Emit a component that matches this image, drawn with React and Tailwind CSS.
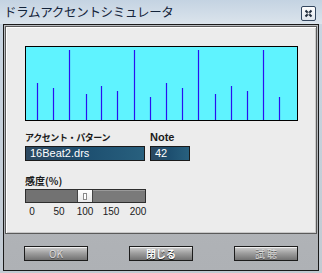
import React from 'react'

const jp = '"Noto Sans CJK JP", "Liberation Sans", sans-serif'
const sans = '"Liberation Sans", "Noto Sans CJK JP", sans-serif'

// accent lines: x inside chart box, top y inside chart box
const accents = [
  [11, 36], [27, 41], [43, 3], [60, 47], [75, 39], [91, 44], [108, 3], [124, 50],
  [140, 36], [156, 41], [172, 3], [189, 47], [205, 39], [221, 44], [237, 3], [253, 50],
]

function Button({ label, active }) {
  return (
    <div className="w-[64px] h-[15px] border border-[#1c1c1c] bg-gradient-to-b from-[#cfcfcf] via-[#9c9c9c] to-[#727272] shadow-[inset_0_1px_0_#efefef] flex items-center justify-center">
      <span
        className={active ? 'text-[10px] leading-none font-bold text-white [text-shadow:0_1px_0_#222]' : 'text-[10px] leading-none text-[#dcdcdc] [text-shadow:0_1px_0_#555]'}
        style={{ fontFamily: jp }}
      >
        {label}
      </span>
    </div>
  )
}

export default function App() {
  return (
    <div className="w-[322px] h-[273px] bg-gradient-to-b from-[#c9d6e3] to-[#c2cad2] overflow-hidden">
      {/* Title bar */}
      <div className="h-[24px] flex items-center justify-between pl-[4px] pr-[6px] bg-gradient-to-b from-[#c4d3e2] to-[#dbe4ec]">
        <span className="text-[12.5px] leading-none text-[#14243a] tracking-[-0.3px]" style={{ fontFamily: jp }}>
          ドラムアクセントシミュレータ
        </span>
        <div className="w-[15px] h-[15px] mt-[2px] rounded-[2px] border border-[#34465e] bg-gradient-to-b from-white to-[#dfe5ec] flex items-center justify-center">
          <svg width="9" height="9" viewBox="0 0 9 9">
            <path d="M1.5 1.5 L7.5 7.5 M7.5 1.5 L1.5 7.5" stroke="#1e2a3a" strokeWidth="2" />
            <rect x="3.5" y="3.5" width="2" height="2" fill="#fff" />
          </svg>
        </div>
      </div>

      {/* Window body */}
      <div className="ml-[3px] w-[316px] h-[247px] border border-[#1a1a1a] bg-gradient-to-b from-[#b9bcc0] to-[#aeb1b5]">
        {/* Panel */}
        <div className="mt-[1px] ml-[1px] w-[312px] h-[208px] border border-[#5a5a5a] bg-[#ececec] shadow-[inset_1px_1px_0_#ffffff,inset_-1px_-1px_0_#c8c8c8] pl-[19px] pt-[19px]">
          <div className="w-[273px] h-[75px] border border-black bg-[#5ff3ff]">
            <svg width="271" height="73" viewBox="0 0 271 73" className="block">
              {accents.map(([x, y], i) => (
                <line key={i} x1={x + 0.5} y1={y} x2={x + 0.5} y2={73} stroke="#2a10f0" strokeWidth="1.2" />
              ))}
            </svg>
          </div>

          <div className="mt-[10px] flex h-[12px] items-center">
            <span className="w-[125px] text-[9px] leading-none font-bold text-[#1a1a1a] tracking-[-0.4px]" style={{ fontFamily: jp }}>
              アクセント・パターン
            </span>
            <span className="text-[11px] leading-none font-bold text-[#1a1a1a]" style={{ fontFamily: sans }}>
              Note
            </span>
          </div>

          <div className="mt-[3px] flex gap-[5px]">
            <div className="w-[120px] h-[15px] border border-[#1a1a1a] bg-gradient-to-r from-[#2c4860] via-[#1d4f70] to-[#28607e] flex items-center pl-[4px]">
              <span className="text-[11px] leading-none text-white" style={{ fontFamily: sans }}>16Beat2.drs</span>
            </div>
            <div className="w-[40px] h-[15px] border border-[#1a1a1a] bg-gradient-to-r from-[#2c4860] via-[#1d4f70] to-[#28607e] flex items-center pl-[4px]">
              <span className="text-[11px] leading-none text-white" style={{ fontFamily: sans }}>42</span>
            </div>
          </div>

          <div className="mt-[14px] h-[12px] flex items-center">
            <span className="text-[10px] leading-none font-bold text-[#1a1a1a]" style={{ fontFamily: jp }}>感度(%)</span>
          </div>

          {/* Slider */}
          <div className="mt-[2px] w-[121px] h-[14px] border border-[#2e2e2e] bg-[#7a7a7a] shadow-[inset_0_1px_0_#9a9a9a,inset_1px_0_0_#9a9a9a] flex">
            <div className="w-[51px] h-full bg-[#727272]" />
            <div className="w-[16px] h-full bg-gradient-to-b from-white to-[#e8e8e8] border-x border-[#444] flex items-center justify-center">
              <div className="w-[4px] h-[7px] border border-[#8a8a8a] bg-white" />
            </div>
            <div className="flex-1 h-full" />
          </div>

          <div className="mt-[4px] relative h-[10px] w-[130px]">
            {[
              ['0', 7], ['50', 34], ['100', 60], ['150', 86], ['200', 113],
            ].map(([t, x]) => (
              <span
                key={t}
                className="absolute top-0 -translate-x-1/2 text-[10px] leading-[10px] text-[#1a1a1a]"
                style={{ left: x, fontFamily: sans }}
              >
                {t}
              </span>
            ))}
          </div>
        </div>

        {/* Footer buttons */}
        <div className="mt-[12px] ml-[20px] flex gap-[41px]">
          <Button label="OK" />
          <Button label="閉じる" active />
          <Button label="試 聴" />
        </div>
      </div>
    </div>
  )
}
